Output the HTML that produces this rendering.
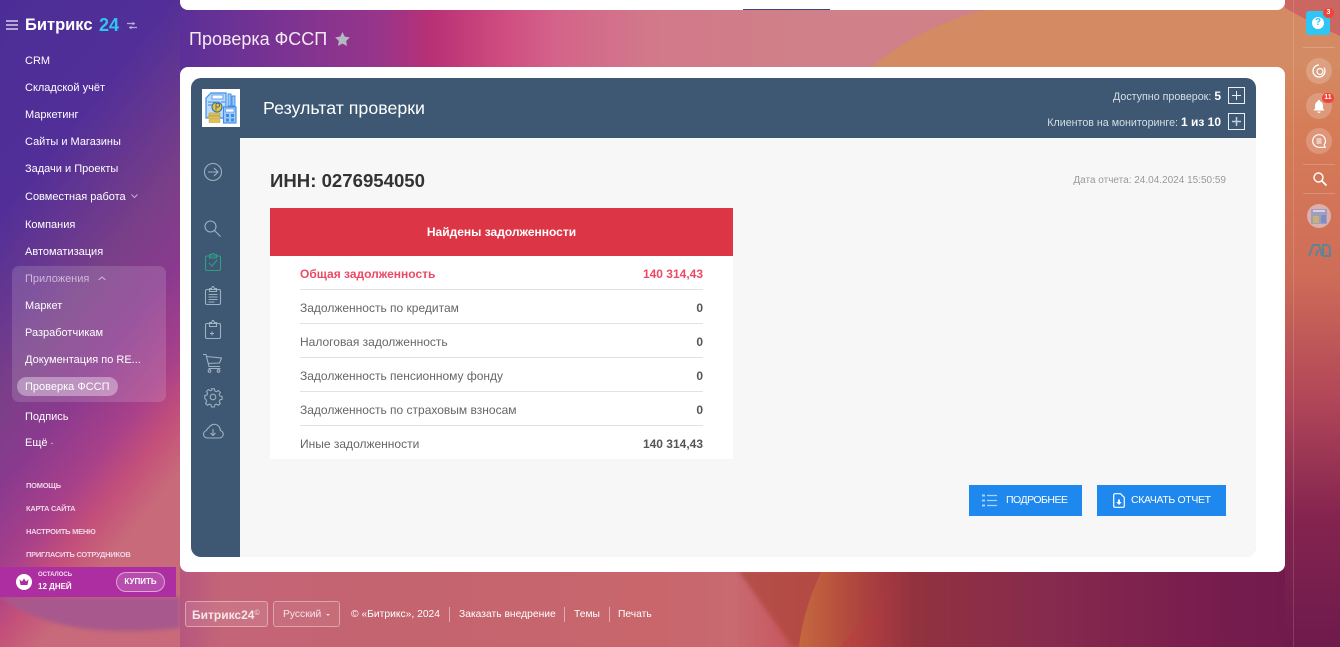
<!DOCTYPE html>
<html lang="ru"><head><meta charset="utf-8"><title>Проверка ФССП</title>
<style>
html,body{margin:0;padding:0;width:1340px;height:647px;overflow:hidden;background:#a03a70;font-family:"Liberation Sans","DejaVu Sans",sans-serif}
.a{position:absolute;white-space:nowrap}
.m{position:absolute;left:25px;font-size:11px;line-height:14px;color:#fff;white-space:nowrap}
.s{position:absolute;left:26px;font-size:7.5px;letter-spacing:-.25px;font-weight:bold;line-height:10px;color:#efd3e6;white-space:nowrap}
.rl{position:absolute;left:300px;font-size:12px;line-height:14px;color:#666;white-space:nowrap}
.rv{position:absolute;right:637px;font-size:12px;line-height:14px;color:#555;font-weight:bold;white-space:nowrap}
.hr{position:absolute;left:300px;width:403px;height:1px;background:#e2e2e2}
.f{position:absolute;font-size:10.3px;line-height:14px;color:#fff;white-space:nowrap;top:608px}
.fs{position:absolute;width:1px;height:15px;top:607px;background:rgba(255,255,255,.45)}
.rc{position:absolute;left:1306px;width:26px;height:26px;border-radius:50%;background:rgba(255,255,255,.2)}
.rs{position:absolute;left:1303px;width:32px;height:1px;background:rgba(255,255,255,.2)}
.badge{position:absolute;background:#ef4438;color:#fff;font-size:7px;font-weight:bold;line-height:10px;height:10px;border-radius:5px;text-align:center}
svg{position:absolute;overflow:visible}
.ic{fill:none;stroke:#9fb0c0;stroke-width:1.1}
</style></head><body>

<svg style="left:0;top:0;overflow:hidden" width="1340" height="647" viewBox="0 0 1340 647">
<defs>
<linearGradient id="t" gradientUnits="userSpaceOnUse" x1="180" y1="0" x2="1294" y2="0"><stop offset="0" stop-color="#5a3098"/><stop offset=".09" stop-color="#7a3392"/><stop offset=".18" stop-color="#98358a"/><stop offset=".225" stop-color="#b83075"/><stop offset=".29" stop-color="#cf4c80"/><stop offset=".34" stop-color="#d4648a"/><stop offset=".42" stop-color="#d2788a"/><stop offset=".56" stop-color="#d08088"/><stop offset="1" stop-color="#d08088"/></linearGradient>
<linearGradient id="r" x1="0" y1="0" x2="0" y2="1"><stop offset="0" stop-color="#d48a62"/><stop offset=".1" stop-color="#d48a62"/><stop offset=".2" stop-color="#d67c58"/><stop offset=".42" stop-color="#cf6d58"/><stop offset=".62" stop-color="#b04658"/><stop offset=".8" stop-color="#84244f"/><stop offset="1" stop-color="#6e1a4c"/></linearGradient>
<linearGradient id="bot" gradientUnits="userSpaceOnUse" x1="176" y1="0" x2="1294" y2="0"><stop offset="0" stop-color="#b55580"/><stop offset=".04" stop-color="#c46478"/><stop offset=".2" stop-color="#c4646f"/><stop offset=".43" stop-color="#c8666c"/><stop offset=".5" stop-color="#c86a70"/><stop offset=".54" stop-color="#c85a62"/><stop offset=".6" stop-color="#b8443f"/><stop offset=".63" stop-color="#a83a40"/><stop offset=".66" stop-color="#92323f"/><stop offset=".78" stop-color="#862a4e"/><stop offset=".9" stop-color="#7a1e4e"/><stop offset="1" stop-color="#701a4c"/></linearGradient>
<linearGradient id="l" gradientUnits="userSpaceOnUse" x1="0" y1="0" x2="366" y2="293"><stop offset="0" stop-color="#4c2d97"/><stop offset=".29" stop-color="#522f98"/><stop offset=".53" stop-color="#7a3f88"/><stop offset=".65" stop-color="#8a3a8e"/><stop offset=".77" stop-color="#a8408a"/><stop offset=".85" stop-color="#c4507a"/><stop offset=".93" stop-color="#c86a7a"/></linearGradient>
<linearGradient id="or" gradientUnits="userSpaceOnUse" x1="800" y1="600" x2="905" y2="600"><stop offset="0" stop-color="#c4683f"/><stop offset=".5" stop-color="#b2483e"/><stop offset="1" stop-color="#92323f" stop-opacity="0"/></linearGradient>
<filter id="bs"><feGaussianBlur stdDeviation="2"/></filter>
</defs>
<rect x="170" y="0" width="1130" height="300" fill="url(#t)"/>
<rect x="170" y="300" width="1130" height="347" fill="url(#bot)"/>
<rect x="0" y="0" width="180" height="647" fill="url(#l)"/>
<path d="M0 597Q60 642 180 628V597Z" fill="#a8588c" filter="url(#bs)"/>
<path d="M868 70Q920 25 992 8H1294V70Z" fill="#d48a62"/>
<path d="M738 570L792 647H802L822 570Z" fill="#b0483f" opacity=".8" filter="url(#bs)"/>
<path d="M822 570Q803 610 799 647H840Q870 610 905 570Z" fill="url(#or)"/>
<rect x="1285" y="0" width="55" height="647" fill="url(#r)"/>
<path d="M1285 0H1340V36Q1310 22 1285 8Z" fill="#cc6660"/>
<rect x="1293" y="0" width="1" height="647" fill="#fff" opacity=".14"/>
</svg>

<!-- Sidebar -->
<svg style="left:6px;top:20px" width="12" height="10"><path d="M0 1h12M0 5h12M0 9h12" stroke="#d8cdea" stroke-width="1.6"/></svg>
<div class="a" style="left:25px;top:14px;font-size:16.500px;line-height:22px;font-weight:bold;color:#fff">Битрикс</div>
<div class="a" style="left:99px;top:14px;font-size:18px;line-height:22px;font-weight:bold;color:#2fc6f6">24</div>
<svg style="left:127px;top:21px" width="10" height="9"><path d="M0 2.500h8M2 6.500h8" stroke="#b8a9d4" stroke-width="1.200"/><circle cx="6" cy="2.500" r="1.300" fill="#b8a9d4"/><circle cx="4" cy="6.500" r="1.300" fill="#b8a9d4"/></svg>

<div class="a" style="left:12px;top:266px;width:154px;height:136px;border-radius:7px;background:rgba(255,255,255,.14)"></div>
<div class="a" style="left:17px;top:377px;width:101px;height:19px;border-radius:10px;background:rgba(255,255,255,.36)"></div>

<div class="m" style="top:54px">CRM</div>
<div class="m" style="top:81px">Складской учёт</div>
<div class="m" style="top:108px">Маркетинг</div>
<div class="m" style="top:135px">Сайты и Магазины</div>
<div class="m" style="top:162px">Задачи и Проекты</div>
<div class="m" style="top:190px">Совместная работа</div>
<svg style="left:131px;top:194px" width="7" height="5"><path d="M.5.5L3.500 3.500L6.500.5" fill="none" stroke="#c2aed8" stroke-width="1"/></svg>
<div class="m" style="top:218px">Компания</div>
<div class="m" style="top:245px">Автоматизация</div>
<div class="m" style="top:272px;color:#d0b8d8">Приложения</div>
<svg style="left:98px;top:276px" width="8" height="5"><path d="M.5 4L4 1L7.500 4" fill="none" stroke="#d0b8d8" stroke-width="1"/></svg>
<div class="m" style="top:299px">Маркет</div>
<div class="m" style="top:326px">Разработчикам</div>
<div class="m" style="top:353px">Документация по RE...</div>
<div class="m" style="top:380px">Проверка ФССП</div>
<div class="m" style="top:410px">Подпись</div>
<div class="m" style="top:436px">Ещё <span style="color:#d9c0d8;font-size:9px">-</span></div>

<div class="s" style="top:481px">ПОМОЩЬ</div>
<div class="s" style="top:504px">КАРТА САЙТА</div>
<div class="s" style="top:527px">НАСТРОИТЬ МЕНЮ</div>
<div class="s" style="top:550px">ПРИГЛАСИТЬ СОТРУДНИКОВ</div>

<div class="a" style="left:0;top:567px;width:176px;height:30px;background:#ad2ea0"></div>
<svg style="left:16px;top:574px" width="16" height="16"><circle cx="8" cy="8" r="8" fill="#fff"/><path d="M3.500 5.500L6 7.500L8 4.500L10 7.500L12.500 5.500L11.500 11H4.500Z" fill="#ad2ea0"/></svg>
<div class="a" style="left:38px;top:571px;font-size:6px;font-weight:bold;line-height:9px;color:#f5dff0">ОСТАЛОСЬ</div>
<div class="a" style="left:38px;top:582px;font-size:8px;font-weight:bold;line-height:10px;color:#fff">12 ДНЕЙ</div>
<div class="a" style="left:116px;top:572px;width:47px;height:18px;border:1px solid rgba(255,255,255,.5);border-radius:10px;background:rgba(255,255,255,.15);color:#fff;font-size:8px;font-weight:bold;line-height:18px;text-align:center">КУПИТЬ</div>

<!-- Top white bar -->
<div class="a" style="left:180px;top:0;width:1105px;height:10px;background:#fff;border-radius:0 0 8px 8px"></div>
<div class="a" style="left:743px;top:9px;width:87px;height:1px;background:#3a4a78"></div>

<div class="a" style="left:189px;top:27px;font-size:18px;line-height:24px;color:#f5e9f3">Проверка ФССП</div>
<svg style="left:335px;top:32px" width="15" height="14" viewBox="0 0 24 23"><path d="M12 0l3.700 7.600 8.300 1.200-6 5.900 1.400 8.300L12 19.100 4.600 23 6 14.700 0 8.800l8.300-1.200z" fill="#b3b9c2"/></svg>

<!-- Main card -->
<div class="a" style="left:180px;top:67px;width:1105px;height:505px;background:#fff;border-radius:8px"></div>
<div class="a" style="left:191px;top:78px;width:1065px;height:479px;background:#3e5873;border-radius:10px"></div>
<div class="a" style="left:240px;top:138px;width:1016px;height:419px;background:#f7f7f7;border-radius:0 0 9px 0"></div>

<!-- Logo -->
<div class="a" style="left:202px;top:89px;width:38px;height:38px;background:#fff"></div>
<svg style="left:202px;top:89px" width="38" height="38" viewBox="0 0 38 38">
<path d="M4 9l5-5h15v25H4z" fill="#bcdcfb" stroke="#3d8be8" stroke-width="1.200"/>
<path d="M10 6h11v4H10z" fill="#fff" stroke="#3d8be8" stroke-width=".8"/>
<path d="M6 13h7M6 16h5M19 13h4" stroke="#3d8be8" stroke-width="1.100"/>
<path d="M26 5h3v12h-3zM30 7h3v10h-3z" fill="#9cc9f7" stroke="#3d8be8" stroke-width=".9"/>
<circle cx="15" cy="18" r="5" fill="#f5c518" stroke="#2f6fc8" stroke-width="1.100"/>
<path d="M14 21.500v-7h2q1.600 0 1.600 1.700T16 18h-2" fill="none" stroke="#2f6fc8" stroke-width=".9"/>
<path d="M7 24h11v2.500H7zM6 27h12v2.500H6zM7 30.500h11v3H7z" fill="#e2c250" stroke="#a98c20" stroke-width=".4"/>
<rect x="21.500" y="18" width="12.500" height="16" fill="#9cc9f7" stroke="#3d8be8" stroke-width="1.100"/>
<path d="M23.500 20h8.500v3h-8.500z" fill="#fff" stroke="#3d8be8" stroke-width=".6"/>
<path d="M24 25h3v3h-3zM29 25h3v3h-3zM24 29.500h3v3h-3zM29 29.500h3v3h-3z" fill="#3d8be8"/>
</svg>

<div class="a" style="left:263px;top:97px;font-size:17.800px;line-height:22px;color:#fff">Результат проверки</div>

<div class="a" style="right:119px;top:89px;font-size:10.700px;line-height:14px;color:#d5dee6">Доступно проверок: <b style="color:#fff;font-size:12px">5</b></div>
<div class="a" style="left:1228px;top:87px;width:15px;height:15px;border:1px solid #e8eef3;box-sizing:content-box"></div>
<svg style="left:1232px;top:91px" width="9" height="9"><path d="M4.500 0v9M0 4.500h9" stroke="#e8eef3" stroke-width="1"/></svg>
<div class="a" style="right:119px;top:115px;font-size:10.700px;line-height:14px;color:#d5dee6">Клиентов на мониторинге: <b style="color:#fff;font-size:12px">1 из 10</b></div>
<div class="a" style="left:1228px;top:113px;width:15px;height:15px;border:1px solid #e8eef3"></div>
<svg style="left:1232px;top:117px" width="9" height="9"><path d="M4.500 0v9M0 4.500h9" stroke="#c4d0da" stroke-width="1.500"/></svg>

<!-- Rail icons -->
<svg style="left:204px;top:163px" width="18" height="18"><g class="ic"><circle cx="9" cy="9" r="8.500"/><path d="M4 9h10M10 5l4 4-4 4"/></g></svg>
<svg style="left:204px;top:220px" width="18" height="18"><g class="ic"><circle cx="6.500" cy="6.500" r="5.500"/><path d="M10.500 10.500l6 6"/></g></svg>
<svg style="left:205px;top:253px" width="16" height="18"><g fill="none" stroke="#2f9e84" stroke-width="1.100"><rect x=".5" y="3" width="15" height="14.500" rx="1.500"/><path d="M4.500 3V1.500h2l1-1h1l1 1h2V5h-7zM4 10l3 3 5-6"/></g></svg>
<svg style="left:205px;top:286px" width="16" height="19"><g class="ic"><rect x=".5" y="3.500" width="15" height="15" rx="1.500"/><path d="M4.500 5.500v-3h2l1-2h1l1 2h2v3zM3.500 8.500h9M3.500 11h9M3.500 13.500h9M3.500 16h6"/></g></svg>
<svg style="left:205px;top:320px" width="16" height="19"><g class="ic"><rect x=".5" y="3.500" width="15" height="15" rx="1.500"/><path d="M4.500 6.500v-4h2l1-2h1l1 2h2v4zM5 13.500h4M7 11.500v4"/></g></svg>
<svg style="left:203px;top:354px" width="20" height="19"><g class="ic"><path d="M0 .5h3l3 12h11M3.500 2.500L18.500 4 16.500 9 5 9.500M5.500 14.500h12"/><circle cx="6.500" cy="17" r="1.300"/><circle cx="15.500" cy="17" r="1.300"/></g></svg>
<svg style="left:204px;top:388px" width="18" height="18" viewBox="0 0 18 18"><g class="ic"><circle cx="9" cy="9" r="2.800"/><path d="M7.500.5h3l.5 2.300 1.700.7 2-1.200 2 2.100-1.200 2 .7 1.600 2.300.5v3l-2.300.5-.7 1.700 1.200 2-2 2-2-1.200-1.700.7-.5 2.300h-3l-.5-2.300-1.700-.7-2 1.200-2-2 1.200-2-.7-1.700L.5 10.500v-3l2.300-.5.700-1.700-1.200-2 2-2 2 1.200 1.700-.7z" transform="scale(.96) translate(.3 .3)"/></g></svg>
<svg style="left:202px;top:423px" width="22" height="16"><g class="ic"><path d="M5 15h12.500a3.800 3.800 0 0 0 .8-7.500A6 6 0 0 0 7 4.500 4 5 0 0 0 4.500 7.500 3.800 3.800 0 0 0 5 15z"/><path d="M11 6v6M8.500 10l2.500 2.500L13.500 10"/></g></svg>

<!-- Content -->
<div class="a" style="left:270px;top:170px;font-size:18.600px;line-height:22px;font-weight:bold;color:#333">ИНН: 0276954050</div>
<div class="a" style="right:114px;top:174px;font-size:10px;line-height:13px;color:#999">Дата отчета: 24.04.2024 15:50:59</div>

<div class="a" style="left:270px;top:208px;width:463px;height:48px;background:#dc3545;color:#fff;text-align:center;font-size:12px;font-weight:bold;line-height:49px">Найдены задолженности</div>
<div class="a" style="left:270px;top:256px;width:463px;height:203px;background:#fff"></div>

<div class="rl" style="top:267px;color:#ec4a64;font-weight:bold">Общая задолженность</div><div class="rv" style="top:267px;color:#ec4a64">140 314,43</div>
<div class="hr" style="top:289px"></div>
<div class="rl" style="top:301px">Задолженность по кредитам</div><div class="rv" style="top:301px">0</div>
<div class="hr" style="top:323px"></div>
<div class="rl" style="top:335px">Налоговая задолженность</div><div class="rv" style="top:335px">0</div>
<div class="hr" style="top:357px"></div>
<div class="rl" style="top:369px">Задолженность пенсионному фонду</div><div class="rv" style="top:369px">0</div>
<div class="hr" style="top:391px"></div>
<div class="rl" style="top:403px">Задолженность по страховым взносам</div><div class="rv" style="top:403px">0</div>
<div class="hr" style="top:425px"></div>
<div class="rl" style="top:437px">Иные задолженности</div><div class="rv" style="top:437px">140 314,43</div>

<!-- Buttons -->
<div class="a" style="left:969px;top:485px;width:113px;height:31px;background:#1e88ee"></div>
<svg style="left:982px;top:494px" width="15" height="13"><path d="M5 1.500h10M5 6.500h10M5 11.500h10" stroke="#a9d2f8" stroke-width="1.200"/><path d="M0 .5h3v2H0zM0 5.500h3v2H0zM0 10.500h3v2H0z" fill="#a9d2f8"/></svg>
<div class="a" style="left:1006px;top:486px;font-size:10.500px;letter-spacing:-.5px;line-height:29px;color:#fff">ПОДРОБНЕЕ</div>
<div class="a" style="left:1097px;top:485px;width:129px;height:31px;background:#1e88ee"></div>
<svg style="left:1113px;top:493px" width="12" height="15"><path d="M2 .7h5.500L11.300 4.500V13a1.300 1.300 0 0 1-1.300 1.300H2A1.300 1.300 0 0 1 .7 13V2A1.300 1.300 0 0 1 2 .7z" fill="none" stroke="#fff" stroke-width="1.200"/><path d="M5 6.500h2v2.500h1.800L6 12 3.200 9H5z" fill="#fff"/></svg>
<div class="a" style="left:1131px;top:486px;font-size:10.500px;letter-spacing:-.35px;line-height:29px;color:#fff">СКАЧАТЬ ОТЧЕТ</div>

<!-- Footer -->
<div class="a" style="left:185px;top:601px;width:81px;height:24px;border:1px solid rgba(255,255,255,.38);border-radius:3px;background:rgba(255,255,255,.1)"></div>
<div class="a" style="left:192px;top:607px;font-size:12px;font-weight:bold;line-height:14px;color:#f7e6e8">Битрикс24<span style="font-size:7px;vertical-align:4px;font-weight:normal">©</span></div>
<div class="a" style="left:273px;top:601px;width:65px;height:24px;border:1px solid rgba(255,255,255,.38);border-radius:3px;background:rgba(255,255,255,.06)"></div>
<div class="f" style="left:283px;color:#f7e6e8">Русский</div>
<div class="a" style="left:326px;top:614px;width:0;height:0;border:2px solid transparent;border-top:2px solid #f0d8dc"></div>
<div class="f" style="left:351px">© «Битрикс», 2024</div>
<div class="fs" style="left:449px"></div>
<div class="f" style="left:459px">Заказать внедрение</div>
<div class="fs" style="left:564px"></div>
<div class="f" style="left:574px">Темы</div>
<div class="fs" style="left:609px"></div>
<div class="f" style="left:618px">Печать</div>

<!-- Right bar -->
<div class="a" style="left:1306px;top:11px;width:24px;height:24px;border-radius:3px;background:#2fc6f6"></div>
<div class="a" style="left:1312px;top:17px;width:12px;height:12px;border-radius:50%;background:#fff;color:#2fc6f6;font-size:10px;font-weight:bold;line-height:12px;text-align:center">?</div>
<div class="badge" style="left:1323px;top:8px;width:11px">3</div>
<div class="rs" style="top:47px"></div>
<div class="rc" style="top:58px"></div>
<svg style="left:1312px;top:64px" width="14" height="14"><circle cx="7" cy="7" r="6" fill="none" stroke="#fff" stroke-width="1.300" stroke-dasharray="28 6"/><circle cx="8" cy="7.500" r="3" fill="none" stroke="#fff" stroke-width="1.200"/></svg>
<div class="rc" style="top:93px"></div>
<svg style="left:1313px;top:100px" width="12" height="13"><path d="M6 0a1 1 0 0 1 1 1.200C9 1.800 10 3.500 10 6v2.500l1.500 2H.5L2 8.500V6c0-2.500 1-4.200 3-4.800A1 1 0 0 1 6 0zM4.500 11.500h3a1.500 1.500 0 0 1-3 0z" fill="#fff"/></svg>
<div class="badge" style="left:1322px;top:93px;width:12px">11</div>
<div class="rc" style="top:128px"></div>
<svg style="left:1312px;top:134px" width="14" height="14"><path d="M7 .7a6.300 6.300 0 1 0 0 12.600h6.300L12 11A6.300 6.300 0 0 0 7 .7z" fill="none" stroke="#fff" stroke-width="1.200"/><path d="M4.500 5h5M4.500 7h5M4.500 9h5" stroke="#fff" stroke-width="1"/></svg>
<div class="rs" style="top:164px"></div>
<svg style="left:1313px;top:172px" width="14" height="14"><circle cx="5.500" cy="5.500" r="4.500" fill="none" stroke="#fff" stroke-width="1.400"/><path d="M9 9l4.500 4.500" stroke="#fff" stroke-width="1.800"/></svg>
<div class="rs" style="top:193px"></div>
<div class="a" style="left:1307px;top:204px;width:24px;height:24px;border-radius:50%;background:#dcb0a8"></div>
<svg style="left:1310px;top:207px" width="18" height="18"><path d="M1 2h16v15H1z" fill="#a09cc4"/><path d="M3 9h6v7H3z" fill="#c6b46c"/><path d="M11 8h5v8h-5z" fill="#7f8dc0"/><path d="M3 4h12" stroke="#d8d0e0" stroke-width="2"/></svg>
<svg style="left:1308px;top:242px" width="24" height="18"><g fill="none" stroke="#5f8498" stroke-width="2"><path d="M1 14L5 3h6l3 11M8 14l2-6"/><path d="M15 14V3h3q4 0 4 4v7h-7"/></g></svg>
</body></html>
